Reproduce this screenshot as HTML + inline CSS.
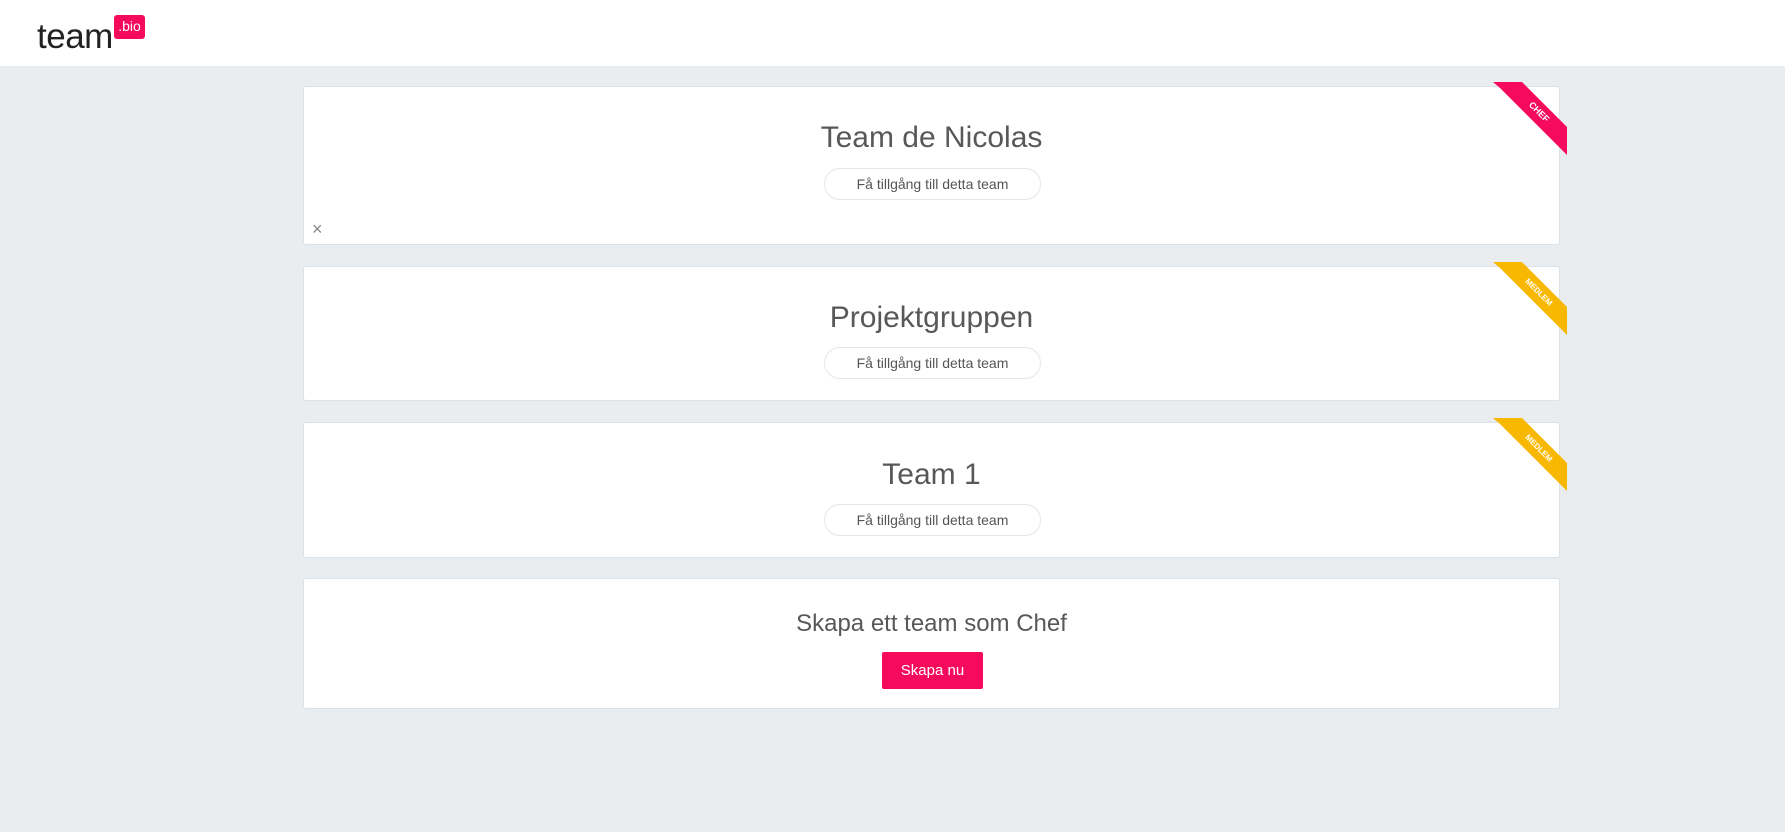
<!DOCTYPE html>
<html><head><meta charset="utf-8"><style>
body{margin:0;width:1785px;height:832px;background:#e9edf0;font-family:"Liberation Sans",sans-serif;position:relative;overflow:hidden}
.hdr{position:absolute;left:0;top:0;width:1785px;height:66px;background:#fff}
.logo{position:absolute;left:37px;top:17px;font-size:35px;color:#222;letter-spacing:-0.5px}
.bio{position:absolute;left:114px;top:15px;width:31px;height:24px;background:#f50a5c;border-radius:3px;color:#fff;font-size:14px;text-align:center;line-height:22px}
.card{position:absolute;left:303px;width:1257px;background:#fff;border:1px solid #dde2e6;border-radius:3px;box-sizing:border-box}
.t{position:absolute;left:0;right:0;text-align:center;color:#585858;font-weight:300}
.btn{position:absolute;left:520px;width:217px;height:32px;border:1px solid #e4e7ea;border-radius:16px;box-sizing:border-box;text-align:center;line-height:30px;font-size:14px;color:#555}
svg{position:absolute;left:0;top:0}
</style></head><body>
<div class="hdr"><div class="logo">team</div><div class="bio">.bio</div></div>

<div class="card" style="top:86px;height:159px">
<div class="t" style="top:34px;font-size:30px">Team de Nicolas</div>
<div class="btn" style="top:81px">Få tillgång till detta team</div>
<div style="position:absolute;left:8px;top:132px;color:#888;font-size:18px">×</div>
</div>
<div class="card" style="top:266px;height:135px">
<div class="t" style="top:34px;font-size:30px">Projektgruppen</div>
<div class="btn" style="top:80px">Få tillgång till detta team</div>
</div>
<div class="card" style="top:422px;height:136px">
<div class="t" style="top:35px;font-size:30px">Team 1</div>
<div class="btn" style="top:81px">Få tillgång till detta team</div>
</div>
<div class="card" style="top:578px;height:131px">
<div class="t" style="top:31px;font-size:24px">Skapa ett team som Chef</div>
<div style="position:absolute;left:578px;top:73px;width:101px;height:37px;background:#f50a5c;border-radius:2px;color:#fff;font-size:15px;text-align:center;line-height:37px">Skapa nu</div>
</div>

<svg width="1785" height="832">
<g>
<polygon points="1493,82 1522,82 1567,127 1567,155 1500,88" fill="#f50a5c"/>
<text transform="translate(1537,114) rotate(45)" fill="#fff" font-size="9" font-weight="bold" text-anchor="middle" font-family="Liberation Sans">CHEF</text>
</g>
<g>
<polygon points="1493,262 1522,262 1567,307 1567,335 1500,268" fill="#f8b800"/>
<text transform="translate(1537,294) rotate(45)" fill="#fff" font-size="8" font-weight="bold" text-anchor="middle" font-family="Liberation Sans">MEDLEM</text>
</g>
<g>
<polygon points="1493,418 1522,418 1567,463 1567,491 1500,424" fill="#f8b800"/>
<text transform="translate(1537,450) rotate(45)" fill="#fff" font-size="8" font-weight="bold" text-anchor="middle" font-family="Liberation Sans">MEDLEM</text>
</g>
</svg>
</body></html>
